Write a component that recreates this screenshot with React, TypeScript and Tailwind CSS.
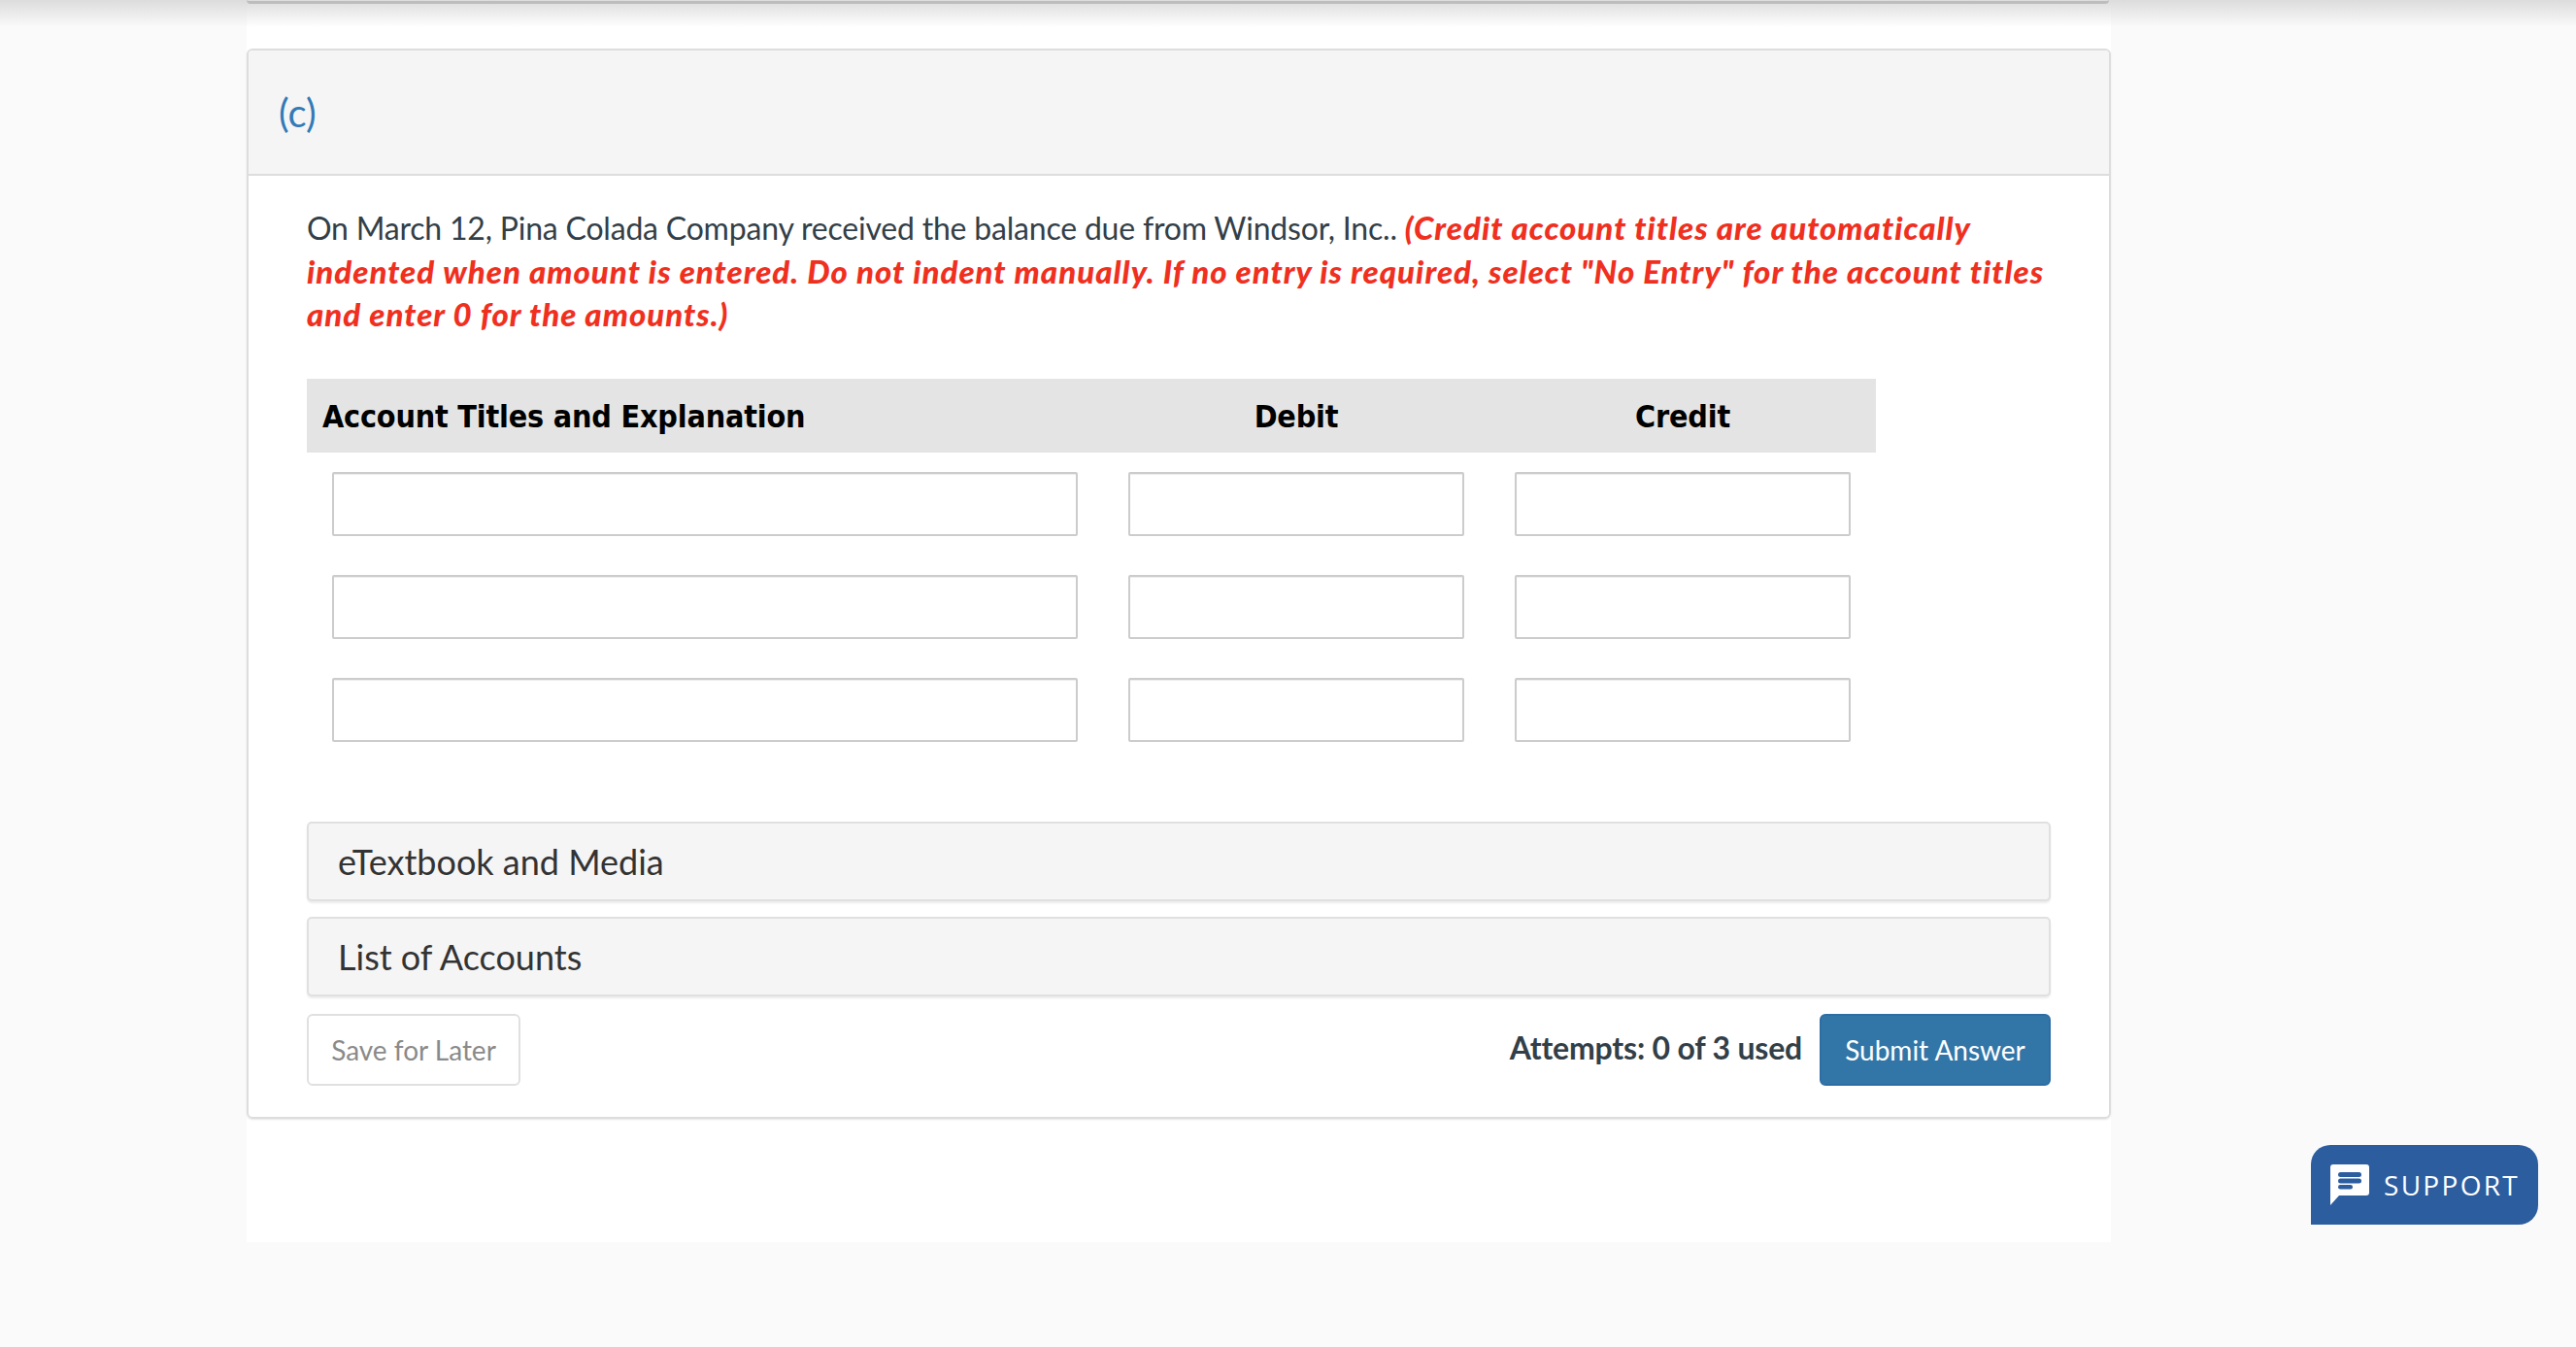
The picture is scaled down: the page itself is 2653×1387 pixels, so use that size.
import React from "react";

const rows = [0, 1, 2];

function Accordion({ label, className }: { label: string; className: string }) {
  return (
    <div className={`h-[82px] flex items-center pl-[30px] bg-[#f5f5f5] border-2 border-[#e0e0e0] rounded-[5px] shadow-[0_2px_2px_rgba(0,0,0,0.08)] text-[36px] text-[#333333] ${className}`}>
      {label}
    </div>
  );
}

function SupportIcon() {
  return (
    <svg width="40" height="42" viewBox="0 0 40 42" className="shrink-0">
      <path d="M3 0H37a3 3 0 0 1 3 3V29a3 3 0 0 1-3 3H9L0 42V3a3 3 0 0 1 3-3Z" fill="#ffffff" />
      <rect x="8" y="8" width="24" height="5" rx="2.5" fill="#2c5d9f" />
      <rect x="8" y="14.5" width="24" height="5" rx="2.5" fill="#2c5d9f" />
      <rect x="8" y="21" width="15" height="4.5" rx="2.25" fill="#2c5d9f" />
    </svg>
  );
}

export default function App() {
  return (
    <div className="relative h-[1387px] overflow-hidden bg-[#fafafa] font-['Lato',sans-serif] text-[#333f48]">
      {/* navbar shadow along the top edge */}
      <div className="absolute inset-x-0 top-0 h-[28px] bg-gradient-to-b from-[#dcdcdc] to-transparent z-10" />

      <div className="ml-[254px] w-[1920px] h-[1279px] bg-white">
        {/* bottom edge of the previous panel */}
        <div className="relative z-20 h-[4px] w-[1918px] border-b-[3px] border-[#bdbdbd] rounded-b-[6px]" />

        <div className="mt-[46px] h-[1102px] border-2 border-[#dddddd] rounded-[6px] shadow-[0_1px_2px_rgba(0,0,0,0.1)] overflow-hidden">
          <div className="h-[129px] flex items-center pl-[31px] bg-[#f5f5f5] border-b-2 border-[#dddddd] text-[40px] text-[#337ab7]">
            (c)
          </div>

          <div className="pl-[60px] pr-[60px] pt-[31px]">
            <p className="text-[33px] leading-[44px]">
              <span className="text-[32px] tracking-[-0.2px]">
                On March 12, Pina Colada Company received the balance due from Windsor, Inc..{" "}
              </span>
              <em className="font-black text-[#f0301f] tracking-[1px]">
                (Credit account titles are automatically indented when amount is entered. Do not indent manually. If no entry is required, select "No Entry" for the account titles and enter 0 for the amounts.)
              </em>
            </p>

            <div className="mt-[45px] w-[1616px] font-['DejaVu_Sans',sans-serif]">
              <div className="grid grid-cols-[820px_398px_398px] h-[76px] items-center bg-[#e4e4e4] text-[32px] font-bold font-stretch-condensed tracking-[-0.2px] text-black">
                <div className="pl-[16px] pt-[2px]">Account Titles and Explanation</div>
                <div className="text-center pt-[2px]">Debit</div>
                <div className="text-center pt-[2px]">Credit</div>
              </div>
              <div className="mt-[20px] flex flex-col gap-[40px]">
                {rows.map((r) => (
                  <div key={r} className="grid grid-cols-[820px_398px_398px] h-[66px]">
                    <div className="px-[26px]">
                      <input className="w-full h-[66px] bg-white border-2 border-[#cccccc] rounded-[2px] shadow-[inset_0_1px_1px_rgba(0,0,0,0.075)]" />
                    </div>
                    <div className="px-[26px]">
                      <input className="w-full h-[66px] bg-white border-2 border-[#cccccc] rounded-[2px] shadow-[inset_0_1px_1px_rgba(0,0,0,0.075)]" />
                    </div>
                    <div className="px-[26px]">
                      <input className="w-full h-[66px] bg-white border-2 border-[#cccccc] rounded-[2px] shadow-[inset_0_1px_1px_rgba(0,0,0,0.075)]" />
                    </div>
                  </div>
                ))}
              </div>
            </div>

            <Accordion label="eTextbook and Media" className="mt-[82px]" />
            <Accordion label="List of Accounts" className="mt-[16px]" />

            <div className="mt-[18px] flex items-start justify-between">
              <button className="w-[220px] h-[74px] bg-white border-2 border-[#e0e0e0] rounded-[6px] text-[28px] text-[#8a8a8a]">
                Save for Later
              </button>
              <div className="flex items-start gap-[18px]">
                <span className="font-bold text-[32px] leading-[69px] tracking-[-0.2px]">Attempts: 0 of 3 used</span>
                <button className="w-[238px] h-[74px] bg-[#3276a8] border-2 border-[#2e6da4] rounded-[6px] text-[28px] text-white">
                  Submit Answer
                </button>
              </div>
            </div>
          </div>
        </div>
      </div>

      <button className="absolute left-[2380px] top-[1179px] w-[234px] h-[82px] flex items-center gap-[15px] pl-[20px] bg-[#2c5d9f] rounded-[20px] rounded-bl-none text-white text-[28px] tracking-[2.3px] font-['Open_Sans',sans-serif]">
        <SupportIcon />
        SUPPORT
      </button>
    </div>
  );
}
